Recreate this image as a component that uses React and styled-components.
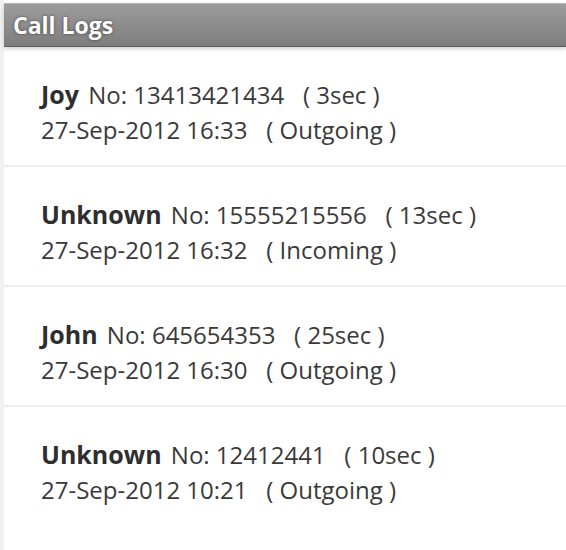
import styled, { createGlobalStyle } from "styled-components";

const GlobalStyle = createGlobalStyle`
  html, body {
    margin: 0;
    padding: 0;
    background: #fff;
  }
  body {
    font-family: "Open Sans", "DejaVu Sans", sans-serif;
  }
`;

const logs = [
  { name: "Joy", number: "13413421434", duration: "3sec", date: "27-Sep-2012 16:33", type: "Outgoing" },
  { name: "Unknown", number: "15555215556", duration: "13sec", date: "27-Sep-2012 16:32", type: "Incoming" },
  { name: "John", number: "645654353", duration: "25sec", date: "27-Sep-2012 16:30", type: "Outgoing" },
  { name: "Unknown", number: "12412441", duration: "10sec", date: "27-Sep-2012 10:21", type: "Outgoing" },
];

const App = () => {
  return (
    <Screen>
      <GlobalStyle />
      <TitleBar>Call Logs</TitleBar>
      <List>
        {logs.map((log, i) => (
          <Row key={i} last={i === logs.length - 1}>
            <Line>
              <Name>{log.name}</Name>
              {` No: ${log.number}   ( ${log.duration} )`}
            </Line>
            <Line>{`${log.date}   ( ${log.type} )`}</Line>
          </Row>
        ))}
      </List>
    </Screen>
  );
};

const Screen = styled.div`
  width: 566px;
  height: 550px;
  box-sizing: border-box;
  padding: 3px 0 0 4px;
  background: #fff;
  box-shadow: inset 4px 0 0 #f1f1f1;
  overflow: hidden;
`;

const TitleBar = styled.div`
  height: 44px;
  box-sizing: border-box;
  padding-left: 9px;
  display: flex;
  align-items: center;
  background: linear-gradient(#9b9c9b, #7d7d7d);
  border-top: 1px solid #b8b8b8;
  border-bottom: 1px solid #5e5e5e;
  box-shadow: 0 2px 4px rgba(0, 0, 0, 0.18);
  color: #fff;
  font-size: 23px;
  font-weight: bold;
  text-shadow: 0 0 3px rgba(0, 0, 0, 0.55);
  position: relative;
  z-index: 1;
`;

const List = styled.div`
  display: flex;
  flex-direction: column;
`;

const Row = styled.div`
  height: 120px;
  box-sizing: border-box;
  padding: 31px 0 0 37px;
  border-bottom: ${(p) => (p.last ? "none" : "2px solid #ececec")};
  display: flex;
  flex-direction: column;
  gap: 2px;
`;

const Line = styled.div`
  font-size: 24px;
  line-height: 33px;
  color: #3a3a3a;
  white-space: pre;
`;

const Name = styled.span`
  font-weight: bold;
  font-size: 25px;
  color: #2e2e2e;
  margin-right: 3px;
`;

export default App;
